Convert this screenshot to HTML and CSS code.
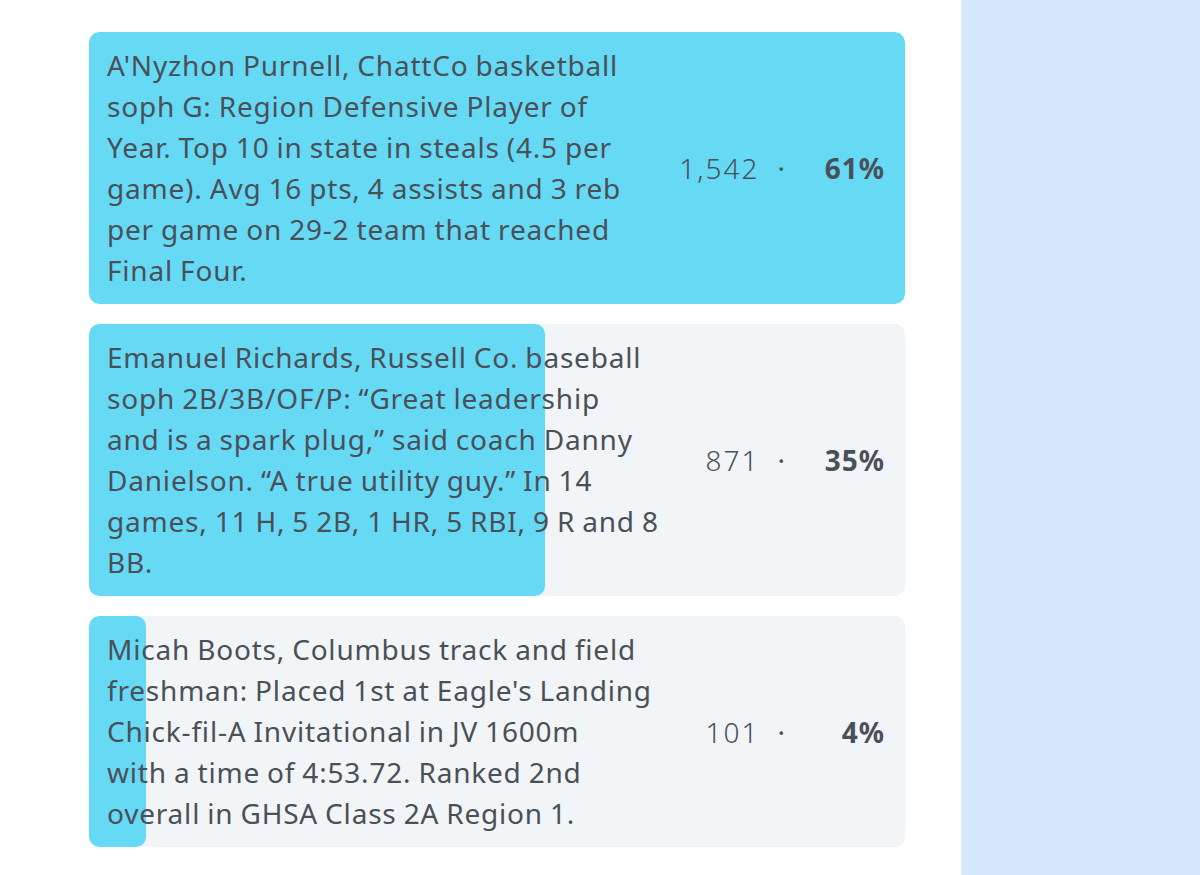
FILE: index.html
```html
<!DOCTYPE html>
<html lang="en">
<head>
  <meta charset="UTF-8">
  <meta name="viewport" content="width=device-width, initial-scale=1.0">
  <title>Poll results</title>
  <link rel="stylesheet" href="styles.css">
</head>
<body>
  <div class="page">
    <main class="results">

      <!-- Resultado 1 -->
      <div class="option">
        <div class="bar" style="width: 100%"></div>
        <div class="option-body">
          <p class="label">A'Nyzhon Purnell, ChattCo basketball<br>soph G: Region Defensive Player of<br>Year. Top 10 in state in steals (4.5 per<br>game). Avg 16 pts, 4 assists and 3 reb<br>per game on 29-2 team that reached<br>Final Four.</p>
          <div class="stats">
            <span class="count">1,542</span>
            <span class="sep">·</span>
            <span class="percent">61%</span>
          </div>
        </div>
      </div>

      <!-- Resultado 2 -->
      <div class="option">
        <div class="bar" style="width: 456px"></div>
        <div class="option-body">
          <p class="label">Emanuel Richards, Russell Co. baseball<br>soph 2B/3B/OF/P: “Great leadership<br>and is a spark plug,” said coach Danny<br>Danielson. “A true utility guy.” In 14<br>games, 11 H, 5 2B, 1 HR, 5 RBI, 9 R and 8<br>BB.</p>
          <div class="stats">
            <span class="count">871</span>
            <span class="sep">·</span>
            <span class="percent">35%</span>
          </div>
        </div>
      </div>

      <!-- Resultado 3 -->
      <div class="option">
        <div class="bar" style="width: 57px"></div>
        <div class="option-body">
          <p class="label">Micah Boots, Columbus track and field<br>freshman: Placed 1st at Eagle's Landing<br>Chick-fil-A Invitational in JV 1600m<br>with a time of 4:53.72. Ranked 2nd<br>overall in GHSA Class 2A Region 1.</p>
          <div class="stats">
            <span class="count">101</span>
            <span class="sep">·</span>
            <span class="percent">4%</span>
          </div>
        </div>
      </div>

    </main>
    <aside class="sidebar"></aside>
  </div>
</body>
</html>
```

FILE: styles.css
```css
body {
  margin: 0;
  font-family: "Noto Sans", "Open Sans", sans-serif;
  color: #4a5058;
  background-color: #fff;
}
.page {
  display: flex;
  min-height: 875px;
}
.results {
  flex: 1;
  display: flex;
  flex-direction: column;
  gap: 20px;
  padding: 32px 56px 0 89px;
}
.sidebar {
  width: 239px;
  background-color: #d5e8fe;
}
.option {
  position: relative;
  background-color: #f2f5f7;
  border-radius: 10px;
  overflow: hidden;
}
.bar {
  position: absolute;
  top: 0;
  left: 0;
  bottom: 0;
  background-color: #66d9f5;
  border-radius: 10px;
}
.option-body {
  position: relative;
  display: flex;
  align-items: center;
  padding: 13px 20px 13px 18px;
}
.label {
  margin: 0;
  font-size: 28px;
  line-height: 41px;
  letter-spacing: 0.8px;
  word-spacing: -1px;
  white-space: nowrap;
}
.stats {
  margin-left: auto;
  display: flex;
  align-items: baseline;
  font-size: 28px;
}
.count {
  font-weight: 300;
  letter-spacing: 2px;
}
.sep {
  margin-left: 18px;
}
.percent {
  width: 100px;
  text-align: right;
  font-weight: 700;
  letter-spacing: 1px;
}
```
